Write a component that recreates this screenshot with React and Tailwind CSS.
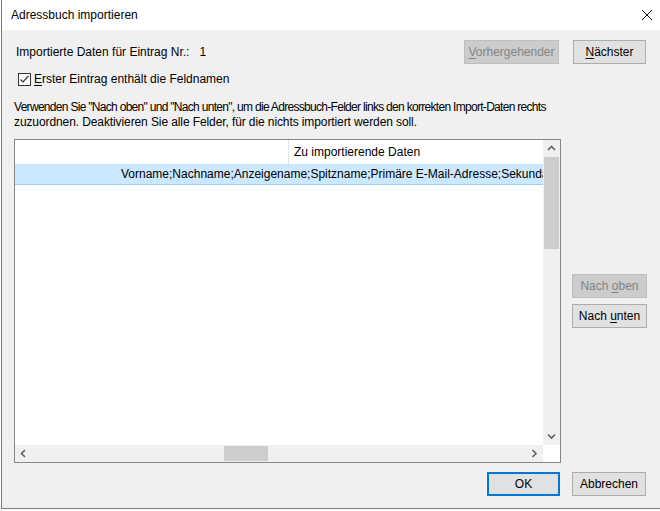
import { useState } from 'react'

// Small chevron used by the scrollbar arrow buttons
function Chevron({ dir }) {
  const pts = {
    up: '1,5 4.5,1.5 8,5',
    down: '1,1.5 4.5,5 8,1.5',
    left: '5,1 1.5,4.5 5,8',
    right: '1.5,1 5,4.5 1.5,8',
  }[dir]
  const horiz = dir === 'left' || dir === 'right'
  return (
    <svg width={horiz ? 7 : 9} height={horiz ? 9 : 7} viewBox={horiz ? '0 0 7 9' : '0 0 9 7'}>
      <polyline points={pts} fill="none" stroke="#606060" strokeWidth="1.6" />
    </svg>
  )
}

// Win10-style push button; `u` is the underlined accelerator letter index
function Btn({ label, u, disabled, primary, className = '' }) {
  const parts = u === undefined ? [label] : [label.slice(0, u), label[u], label.slice(u + 1)]
  return (
    <button
      className={
        'h-[24px] flex items-center justify-center leading-none ' +
        (disabled
          ? 'bg-[#cccccc] border border-[#bfbfbf] text-[#838383] '
          : primary
            ? 'bg-[#e1e1e1] border-2 border-[#0078d7] text-black '
            : 'bg-[#e1e1e1] border border-[#adadad] text-black ') +
        className
      }
    >
      {u === undefined ? (
        label
      ) : (
        <span>
          {parts[0]}
          <span className="underline underline-offset-2">{parts[1]}</span>
          {parts[2]}
        </span>
      )}
    </button>
  )
}

function Checkbox({ checked }) {
  return (
    <span className="w-[13px] h-[13px] border border-[#333333] bg-white flex items-center justify-center shrink-0">
      {checked && (
        <svg width="11" height="11" viewBox="0 0 11 11">
          <polyline points="1.5,5.5 4,8 9.5,2" fill="none" stroke="#333333" strokeWidth="1.2" />
        </svg>
      )}
    </span>
  )
}

export default function App() {
  const [firstRowNames] = useState(true)
  const row =
    'Vorname;Nachname;Anzeigename;Spitzname;Primäre E-Mail-Adresse;Sekundäre E-Mail-Adresse;Tel. dienstlich'

  return (
    <div
      className="w-[660px] h-[511px] overflow-hidden bg-white text-[12px] text-black"
      style={{ fontFamily: '"Liberation Sans", Arial, sans-serif' }}
    >
      <div className="ml-[1px] w-[659px] h-[509px] border-l border-b border-[#7a7a7a] bg-[#f0f0f0] flex flex-col">
        {/* title bar */}
        <div className="h-[30px] bg-white flex items-center justify-between pl-[9px] pr-[7px] shrink-0">
          <span>Adressbuch importieren</span>
          <svg width="12" height="12" viewBox="0 0 12 12">
            <path d="M1 1 L11 11 M11 1 L1 11" stroke="#111" strokeWidth="1" />
          </svg>
        </div>

        <div className="flex flex-col pl-[11px] pr-[14px]">
          {/* record navigation */}
          <div className="mt-[10px] flex items-center justify-between">
            <span className="pl-[3px]">
              Importierte Daten für Eintrag Nr.:<span className="ml-[10px]">1</span>
            </span>
            <div className="flex gap-[14px]">
              <Btn label="Vorhergehender" u={0} disabled className="w-[95px]" />
              <Btn label="Nächster" u={0} className="w-[73px]" />
            </div>
          </div>

          <label className="mt-[8px] flex items-center gap-[3px] pl-[5px] h-[14px]">
            <Checkbox checked={firstRowNames} />
            <span>
              <span className="underline underline-offset-2">E</span>rster Eintrag enthält die Feldnamen
            </span>
          </label>

          <p className="mt-[14px] leading-[15px] pl-[1px] whitespace-nowrap">
            <span className="tracking-[-0.7px]">
              Verwenden Sie "Nach oben" und "Nach unten", um die Adressbuch-Felder links den korrekten Import-Daten rechts
            </span>
            <br />
            <span className="tracking-[-0.1px]">
              zuzuordnen. Deaktivieren Sie alle Felder, für die nichts importiert werden soll.
            </span>
          </p>

          <div className="mt-[9px] flex items-center gap-[11px]">
            {/* field mapping list */}
            <div className="ml-[1px] w-[547px] h-[324px] border border-[#828790] bg-white flex flex-col">
              <div className="flex flex-1 min-h-0">
                <div className="flex-1 min-w-0 flex flex-col overflow-hidden">
                  <div className="h-[24px] flex shrink-0">
                    <div className="w-[274px] border-r border-[#e5e5e5]" />
                    <div className="pl-[5px] flex items-center whitespace-nowrap">Zu importierende Daten</div>
                  </div>
                  <div className="h-[21px] bg-[#cce8ff] border-b border-[#99d1ff] flex items-center whitespace-nowrap pl-[106px]">
                    {row}
                  </div>
                </div>
                {/* vertical scrollbar */}
                <div className="w-[17px] bg-[#f0f0f0] flex flex-col items-center shrink-0">
                  <div className="h-[17px] flex items-center justify-center">
                    <Chevron dir="up" />
                  </div>
                  <div className="w-[15px] h-[92px] bg-[#cdcdcd]" />
                  <div className="flex-1" />
                  <div className="h-[17px] flex items-center justify-center">
                    <Chevron dir="down" />
                  </div>
                </div>
              </div>
              {/* horizontal scrollbar */}
              <div className="h-[17px] flex shrink-0">
                <div className="flex-1 bg-[#f0f0f0] flex items-center">
                  <div className="w-[17px] flex justify-center">
                    <Chevron dir="left" />
                  </div>
                  <div className="ml-[192px] w-[44px] h-[15px] bg-[#cdcdcd]" />
                  <div className="flex-1" />
                  <div className="w-[17px] flex justify-center">
                    <Chevron dir="right" />
                  </div>
                </div>
                <div className="w-[17px] bg-white" />
              </div>
            </div>

            <div className="flex flex-col gap-[6px]">
              <Btn label="Nach oben" u={5} disabled className="w-[75px]" />
              <Btn label="Nach unten" u={5} className="w-[75px]" />
            </div>
          </div>

          <div className="mt-[9px] flex justify-end gap-[12px]">
            <Btn label="OK" primary className="w-[73px]" />
            <Btn label="Abbrechen" className="w-[74px]" />
          </div>
        </div>
      </div>
    </div>
  )
}
